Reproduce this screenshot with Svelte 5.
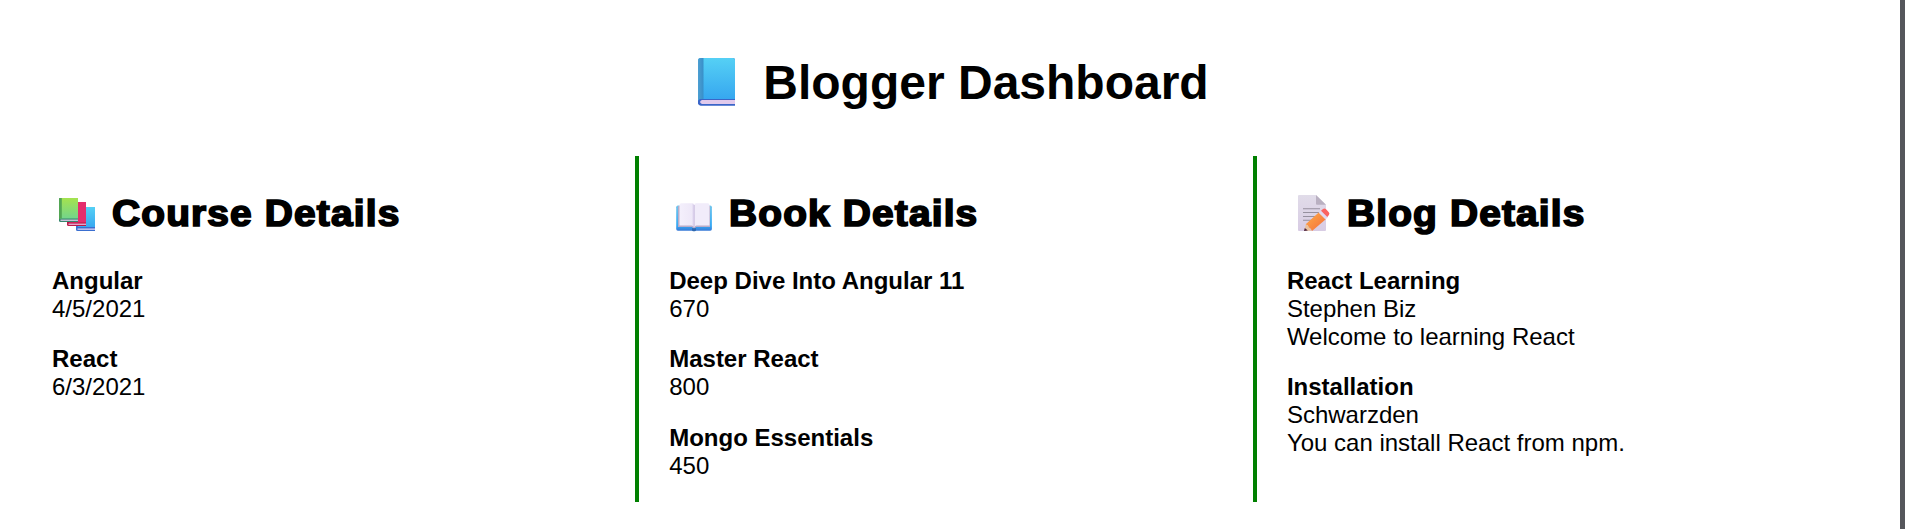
<script>
  const columns = [
    {
      title: 'Course Details', icon: 'courses',
      items: [['Angular', '4/5/2021'], ['React', '6/3/2021']]
    },
    {
      title: 'Book Details', icon: 'book',
      items: [['Deep Dive Into Angular 11', '670'], ['Master React', '800'], ['Mongo Essentials', '450']]
    },
    {
      title: 'Blog Details', icon: 'memo',
      items: [
        ['React Learning', 'Stephen Biz', 'Welcome to learning React'],
        ['Installation', 'Schwarzden', 'You can install React from npm.']
      ]
    }
  ];
</script>

<div class="page">
  <h1>
    <svg width="70" height="56" viewBox="0 0 70 56" aria-hidden="true">
      <defs>
        <linearGradient id="blue" x2="0" y2="1"><stop stop-color="#55d0f5" /><stop offset="1" stop-color="#35a5ef" /></linearGradient>
        <linearGradient id="spine" x2="1"><stop stop-color="#4d9fd2" /><stop offset="1" stop-color="#378fc9" /></linearGradient>
      </defs>
      <path d="M8 4h32q2 0 2 2v45.500H8q-3-.5-3-3V7q0-3 3-3Z" fill="#3667c7" />
      <path d="M9 46h33v4H9q-2 0-2-2t2-2Z" fill="#e1caec" />
      <path d="M8 4h32q2 0 2 2v39H8q-2 0-3 2V7q0-3 3-3Z" fill="url(#blue)" />
      <path d="M8 4h2.500v41H8q-2 0-3 2V7q0-3 3-3Z" fill="url(#spine)" />
      <path d="M5 47q1-2 3-2h34v1H9q-2 0-2 2t2 2h33v1.500H8q-3-.5-3-3Z" fill="#3b65c8" />
    </svg>
    <span>Blogger Dashboard</span>
  </h1>

  <main>
    {#each columns as column}
      <section>
        <h2>
          <svg width="50" height="50" viewBox="0 0 50 50" aria-hidden="true">
            {#if column.icon === 'courses'}
              <defs>
                <linearGradient id="green" x2="0" y2="1"><stop stop-color="#a5e34e" /><stop offset="1" stop-color="#73d58b" /></linearGradient>
                <linearGradient id="sky" x2="0" y2="1"><stop stop-color="#55d0f5" /><stop offset="1" stop-color="#38a8f0" /></linearGradient>
              </defs>
              <path d="M25 19h18v24H25.500q-1.500 0-1.500-1.500V20q0-1 1-1Z" fill="#3a6fd0" />
              <path d="M26 19h17v20H26Z" fill="url(#sky)" />
              <path d="M25.500 40.500H43v1.300H25.500Z" fill="#dfd0f3" />
              <path d="M16 14h18v24H16.500q-1.500 0-1.500-1.500V15q0-1 1-1Z" fill="#bb1849" />
              <path d="M17 14h17v20.500H17Z" fill="#e42d6d" />
              <path d="M16.500 35.600H34v1.300H16.500Z" fill="#e9b5d8" />
              <path d="M8 10h18v24H8.500Q7 34 7 32.500V11q0-1 1-1Z" fill="#35866d" />
              <path d="M8 10h18v20.500H8Z" fill="url(#green)" />
              <path d="M7 11q0-1 1-1h1.800v20.500H8l-1 1Z" fill="#52a653" />
              <path d="M8.500 31.600H26v1.300H8.500Z" fill="#d9c8e5" />
            {:else if column.icon === 'book'}
              <defs>
                <linearGradient id="cover" x2="0" y2="1"><stop stop-color="#72c5ec" /><stop offset=".8" stop-color="#35a9f4" /><stop offset="1" stop-color="#3877d5" /></linearGradient>
                <linearGradient id="leaf" x2="1"><stop stop-color="#f4f0fc" /><stop offset=".85" stop-color="#eee8f8" /><stop offset="1" stop-color="#d7cbea" /></linearGradient>
              </defs>
              <rect x="7.200" y="17.500" width="35.700" height="25.300" rx="1.700" fill="url(#cover)" />
              <path d="M9 18h32v21H27l-1.500 1.500h-1L23 39H9Z" fill="#b9acc9" />
              <path d="M10.500 17q0-1.700 1.700-1.700H23q2 0 2 2V39q-1-1.500-2.500-1.500h-12Z" fill="url(#leaf)" />
              <path d="M25 17.300q0-2 2-2h11.800q1.700 0 1.700 1.700v20.500h-13Q26 37.500 25 39Z" fill="#f1ecfa" />
              <path d="M24.500 17h1.500v21h-1.500Z" fill="#d6cce7" />
              <path d="M23 40.200h4v2.300q-2 1.700-4 0Z" fill="#2e68ae" />
            {:else}
              <defs>
                <linearGradient id="paper" x2="0" y2="1"><stop stop-color="#e1dce9" /><stop offset="1" stop-color="#d8cce4" /></linearGradient>
                <linearGradient id="pencil" x1="0" y1="0" x2="1" y2="1"><stop stop-color="#ffad48" /><stop offset="1" stop-color="#f36c3b" /></linearGradient>
              </defs>
              <path d="M12 7h17l10 10v25q0 1-1 1H12q-1 0-1-1V8q0-1 1-1Z" fill="url(#paper)" />
              <path d="M29 7l10 9.800H30q-1 0-1-1Z" fill="#b9b0c1" />
              <path d="M16 20.700h17M16 24.500h16M16 28.500h13M16 32.300h9" stroke="#96909f" stroke-width="1.100" />
              <path d="M17 43l2-7 5.500 6.500Z" fill="#eac29d" />
              <path d="M17 43l.8-3 3 2.600Z" fill="#48213f" />
              <path d="M18.700 36.200L32 24.300l6.800 7L25 43q-1-3-3-3.600-.5-2.300-3.300-3.200Z" fill="url(#pencil)" />
              <path d="M31.700 24.800l2.700-2.400 6.700 6.600-2.600 2.600Z" fill="#e2d8ee" />
              <path d="M34 22.800l2-1.700q1.700-1.200 3.300.5l2.300 2.300q1.500 1.500.3 3.200l-1.600 2Z" fill="#fa6361" />
            {/if}
          </svg>
          <span>{column.title}</span>
        </h2>
        <ul>
          {#each column.items as [name, ...details]}
            <li>
              <strong>{name}</strong>
              {#each details as line}<div>{line}</div>{/each}
            </li>
          {/each}
        </ul>
      </section>
    {/each}
  </main>
</div>

<style>
  :global(body) {
    background: #fff;
  }
  .page {
    box-sizing: border-box;
    height: 529px;
    overflow: hidden;
    border-right: 5px solid #55565b;
    padding-top: 54px;
    color: #000;
    font: 24px/28px 'Liberation Sans', Arial, sans-serif;
  }
  h1 {
    display: flex;
    justify-content: center;
    height: 56px;
    margin: 0 0 46px;
    padding-left: 2px;
    font-size: 48px;
    line-height: 58px;
  }
  main {
    display: grid;
    grid-template-columns: 618px 617.7px 618px;
    height: 346px;
    margin-left: 17px;
  }
  section {
    border-left: 4px solid green;
    padding: 32px 0 0 30.2px;
  }
  section:first-child {
    border-color: transparent;
    padding-left: 31px;
  }
  h2 {
    display: flex;
    gap: 9.8px;
    height: 50px;
    margin: 0 0 29px;
    font: bold 36px/52px 'Liberation Sans', Arial, sans-serif;
    letter-spacing: 1.07px;
    white-space: nowrap;
    -webkit-text-stroke: 1.7px #000;
  }
  h2 span {
    transform: scaleX(1.08);
    transform-origin: left;
  }
  h1 svg,
  h2 svg {
    flex: none;
  }
  ul {
    display: grid;
    gap: 22.4px;
    margin: 0;
    padding: 0;
    list-style: none;
  }
  strong {
    display: block;
  }
</style>
